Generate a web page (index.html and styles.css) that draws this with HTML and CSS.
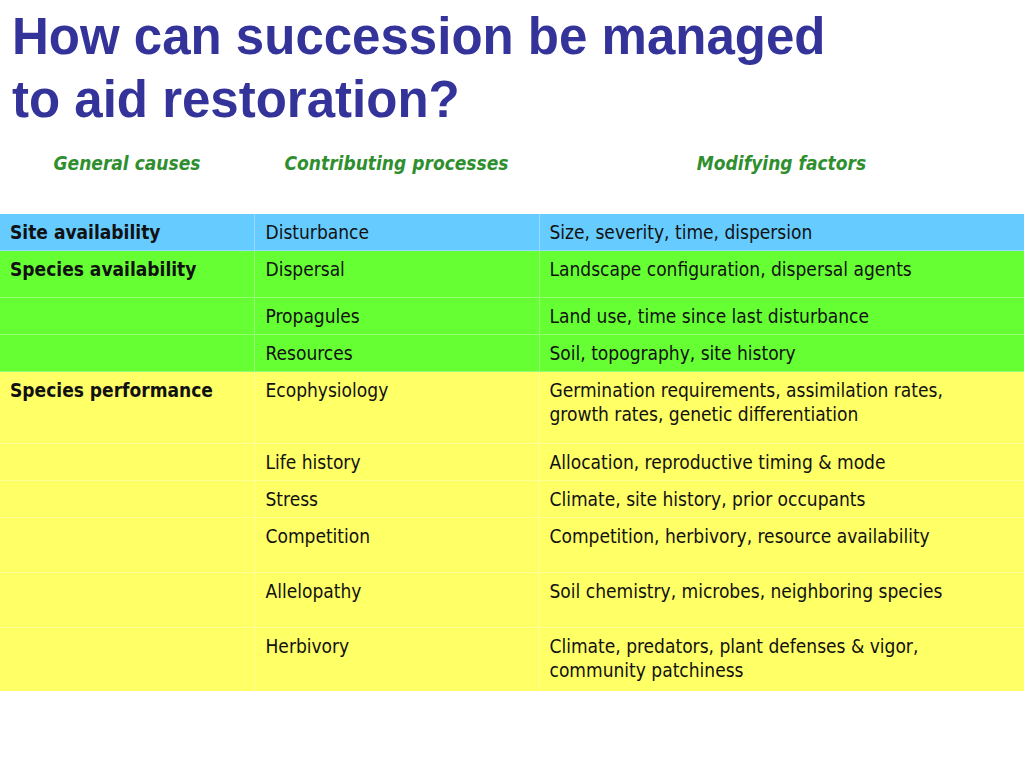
FILE: index.html
```html
<!DOCTYPE html>
<html>
<head>
<meta charset="utf-8">
<link rel="stylesheet" href="styles.css">
</head>
<body>
<h1 class="title">How can succession be managed<br>to aid restoration?</h1>
<div class="heads">
  <div class="head">General causes</div>
  <div class="head">Contributing processes</div>
  <div class="head">Modifying factors</div>
</div>
<table class="grid">
  <colgroup><col class="c1"><col class="c2"><col class="c3"></colgroup>
  <tr class="blue h37"><td class="cause">Site availability</td><td>Disturbance</td><td>Size, severity, time, dispersion</td></tr>
  <tr class="green h47"><td class="cause">Species availability</td><td>Dispersal</td><td>Landscape configuration, dispersal agents</td></tr>
  <tr class="green h37"><td class="cause"></td><td>Propagules</td><td>Land use, time since last disturbance</td></tr>
  <tr class="green h37"><td class="cause"></td><td>Resources</td><td>Soil, topography, site history</td></tr>
  <tr class="yellow h72"><td class="cause">Species performance</td><td>Ecophysiology</td><td>Germination requirements, assimilation rates, growth rates, genetic differentiation</td></tr>
  <tr class="yellow h37"><td class="cause"></td><td>Life history</td><td>Allocation, reproductive timing &amp; mode</td></tr>
  <tr class="yellow h37"><td class="cause"></td><td>Stress</td><td>Climate, site history, prior occupants</td></tr>
  <tr class="yellow h55"><td class="cause"></td><td>Competition</td><td>Competition, herbivory, resource availability</td></tr>
  <tr class="yellow h55"><td class="cause"></td><td>Allelopathy</td><td>Soil chemistry, microbes, neighboring species</td></tr>
  <tr class="yellow h63"><td class="cause"></td><td>Herbivory</td><td>Climate, predators, plant defenses &amp; vigor, community patchiness</td></tr>
</table>
</body>
</html>
```
FILE: styles.css
```css
html, body {
  margin: 0;
  padding: 0;
  background: #ffffff;
}
body {
  width: 1024px;
  height: 768px;
  overflow: hidden;
  font-family: "DejaVu Sans Condensed", "DejaVu Sans", sans-serif;
}
.title {
  margin: 5px 0 0 12px;
  font-family: "Liberation Sans", Arial, sans-serif;
  font-weight: bold;
  font-size: 51px;
  line-height: 63px;
  color: #333399;
}
.heads {
  display: grid;
  grid-template-columns: 254px 285px 485px;
  margin-top: 20px;
  height: 62px;
}
.head {
  text-align: center;
  font-style: italic;
  font-weight: bold;
  font-size: 19px;
  line-height: 24px;
  color: #2f8f2f;
}
.grid {
  border-collapse: collapse;
  width: 1024px;
  table-layout: fixed;
}
.c1 { width: 254px; }
.c2 { width: 285px; }
.c3 { width: 485px; }
.grid td {
  vertical-align: top;
  padding: 6px 10px 0 10px;
  font-size: 19px;
  line-height: 24px;
  color: #111111;
  border-top: 1px solid rgba(255,255,255,0.3);
  border-left: 1px solid rgba(255,255,255,0.3);
}
.grid td:first-child { border-left: none; }
.grid td:nth-child(2) { padding-left: 11px; }
.grid td:nth-child(3) { padding-right: 50px; }
.grid .cause { font-weight: bold; }
.blue { background: #66ccff; }
.green { background: #66ff33; }
.yellow { background: #ffff66; }
.h37 { height: 37px; }
.h47 { height: 47px; }
.h55 { height: 55px; }
.h63 { height: 63px; }
.h72 { height: 72px; }
```
